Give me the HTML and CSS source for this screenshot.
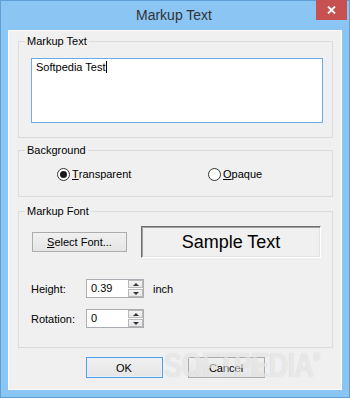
FILE: index.html
```html
<!DOCTYPE html>
<html lang="en">
<head>
  <meta charset="UTF-8" />
  <title>Markup Text</title>
  <link rel="stylesheet" href="styles.css">
</head>
<body>
  <div class="window">
    <div class="titlebar">
      <span></span>
      <span class="title">Markup Text</span>
      <button class="close" title="Close">
        <svg width="9" height="8" viewBox="0 0 9 8"><path d="M1 0.5 L8 7.5 M8 0.5 L1 7.5" stroke="#fff" stroke-width="1.8" fill="none"/></svg>
      </button>
    </div>

    <div class="client">
      <fieldset class="group group-text">
        <legend>Markup Text</legend>
        <div class="group-body text-body">
          <div class="edit">Softpedia Test<span class="caret"></span></div>
        </div>
      </fieldset>

      <fieldset class="group group-bg">
        <legend>Background</legend>
        <div class="group-body radios">
          <label class="radio"><span class="dot on"></span><u>T</u>ransparent</label>
          <label class="radio"><span class="dot"></span><u>O</u>paque</label>
        </div>
      </fieldset>

      <fieldset class="group group-font">
        <legend>Markup Font</legend>
        <div class="group-body font-body">
          <div class="font-row">
            <button class="btn btn-select"><u>S</u>elect Font...</button>
            <div class="sample">Sample Text</div>
          </div>
          <div class="field-row">
            <span class="field-label">Height:</span>
            <div class="spin">
              <span class="spin-value">0.39</span>
              <span class="spin-arrows"><span class="arrow up"></span><span class="arrow down"></span></span>
            </div>
            <span class="unit">inch</span>
          </div>
          <div class="field-row">
            <span class="field-label">Rotation:</span>
            <div class="spin">
              <span class="spin-value">0</span>
              <span class="spin-arrows"><span class="arrow up"></span><span class="arrow down"></span></span>
            </div>
          </div>
        </div>
      </fieldset>

      <div class="actions">
        <button class="btn btn-default">OK</button>
        <button class="btn">Cancel</button>
      </div>
    </div>

    <div class="watermark">SOFTPEDIA<sup>®</sup></div>
  </div>
</body>
</html>
```

FILE: styles.css
```css
* {
  box-sizing: border-box;
}

body {
  margin: 0;
  background: #8ac5f4;
  font-family: "Liberation Sans", Arial, sans-serif;
  font-size: 11px;
  color: #000;
}

.window {
  position: relative;
  width: 350px;
  height: 398px;
  background: #8ac5f4;
  border: 1px solid #5f9fd8;
  padding: 0 7px 7px;
  display: flex;
  flex-direction: column;
}

/* title bar */
.titlebar {
  height: 29px;
  margin: 0 -5px 0 -7px;
  display: grid;
  grid-template-columns: 1fr auto 1fr;
}

.title {
  font-size: 14px;
  line-height: 29px;
  color: #333;
}

.close {
  justify-self: end;
  align-self: start;
  width: 31px;
  height: 20px;
  margin-top: -1px;
  border: none;
  padding: 0;
  background: #c75050;
  display: flex;
  align-items: center;
  justify-content: center;
}

/* dialog client area */
.client {
  flex: 1;
  background: #f0f0f0;
  border: 1px solid #fbfbfb;
  display: flex;
  flex-direction: column;
}

.group {
  margin: 0 8px 0 9px;
  padding: 0;
  border: 1px solid #dcdcdc;
  min-width: 0;
}

.group legend {
  margin-left: 6px;
  padding: 0 2px;
  line-height: 14px;
}

.group-text { margin-top: 3px; }
.group-bg { margin-top: 5px; }
.group-font { margin-top: 7px; }

.text-body {
  padding: 10px 9px 14px 12px;
}

.edit {
  height: 65px;
  border: 1px solid #6aaee8;
  background: #fff;
  padding: 2px 4px;
  line-height: 13px;
}

.caret {
  display: inline-block;
  width: 1px;
  height: 12px;
  background: #000;
  vertical-align: -2px;
}

.radios {
  display: flex;
  padding: 9px 0 14px 38px;
}

.radio {
  display: flex;
  align-items: center;
  height: 16px;
}

.radio:first-child {
  width: 151px;
}

.dot {
  width: 13px;
  height: 13px;
  margin-right: 2px;
  border: 1px solid #333;
  border-radius: 50%;
  background: #fff;
  display: flex;
  align-items: center;
  justify-content: center;
}

.dot.on::after {
  content: "";
  width: 7px;
  height: 7px;
  border-radius: 50%;
  background: #1a1a1a;
}

.font-body {
  padding: 8px 9px 19px 12px;
}

.font-row {
  display: flex;
  align-items: center;
  height: 32px;
}

.btn {
  width: 77px;
  height: 21px;
  padding: 0;
  border: 1px solid #acacac;
  background: linear-gradient(#f0f0f0, #e5e5e5);
  font: inherit;
  color: #000;
}

.btn-select {
  margin-left: 1px;
  width: 95px;
  height: 20px;
}

.btn-default {
  border-color: #4fa0e6;
  box-shadow: inset 0 0 0 1px #e6f1fb;
}

.sample {
  margin-left: 14px;
  width: 180px;
  height: 32px;
  border: 1px solid;
  border-color: #6e6e6e #ffffff #ffffff #6e6e6e;
  box-shadow: inset 1px 1px 0 #a0a0a0, inset -1px -1px 0 #e3e3e3;
  font-size: 18px;
  display: flex;
  align-items: center;
  justify-content: center;
}

.field-row {
  display: flex;
  align-items: center;
  height: 19px;
  margin-top: 21px;
}

.field-row + .field-row {
  margin-top: 11px;
}

.field-label {
  width: 55px;
}

.spin {
  width: 58px;
  height: 19px;
  border: 1px solid #abadb3;
  background: #fff;
  display: flex;
}

.spin-value {
  flex: 1;
  padding-left: 4px;
  line-height: 17px;
}

.spin-arrows {
  width: 16px;
  display: flex;
  flex-direction: column;
  gap: 1px;
  padding: 0 0 0 1px;
}

.arrow {
  flex: 1;
  border: 1px solid #b9b9b9;
  background: linear-gradient(#f4f4f4, #e6e6e6);
  display: flex;
  align-items: center;
  justify-content: center;
}

.arrow.up::after,
.arrow.down::after {
  content: "";
  border-left: 3px solid transparent;
  border-right: 3px solid transparent;
}

.arrow.up::after {
  border-bottom: 3px solid #333;
}

.arrow.down::after {
  border-top: 3px solid #333;
}

.unit {
  margin-left: 9px;
}

.actions {
  margin-top: 9px;
  display: flex;
  justify-content: center;
  gap: 25px;
}

/* site watermark over the dialog */
.watermark {
  position: absolute;
  left: 163px;
  top: 344px;
  font-size: 35px;
  font-weight: bold;
  letter-spacing: -1px;
  color: rgba(255, 255, 255, 0.6);
  text-shadow: 0 0 1px rgba(0, 0, 0, 0.18);
  transform: scaleX(0.78);
  transform-origin: left top;
  pointer-events: none;
}

.watermark sup {
  font-size: 12px;
  vertical-align: 16px;
}
```
